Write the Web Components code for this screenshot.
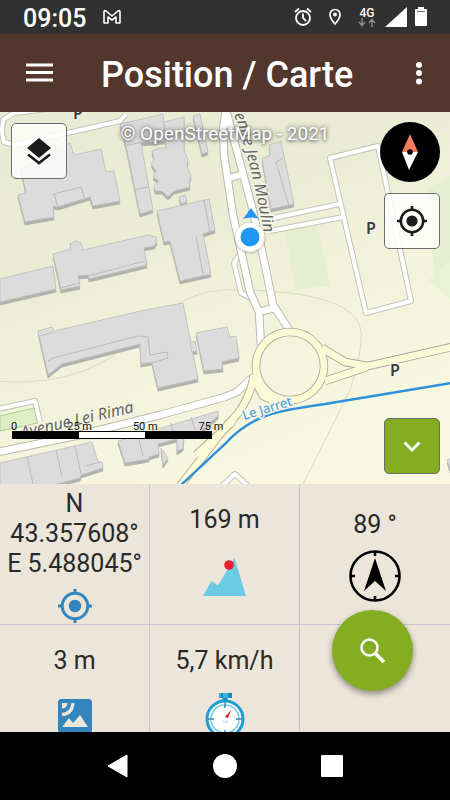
<!DOCTYPE html>
<html lang="fr">
<head>
<meta charset="utf-8">
<meta name="viewport" content="width=device-width, initial-scale=1">
<title>Position / Carte</title>
<style>
    body {
        margin: 0;
        height: 100vh;
        display: flex;
        flex-direction: column;
        overflow: hidden;
        font-family: Roboto, "Liberation Sans", sans-serif;
        background: #000;
    }
    map-view { flex: 3 1 0; min-height: 0; }
    data-panel { flex: 2 1 0; min-height: 0; }
</style>
</head>
<body>
<status-bar time="09:05"></status-bar>
<app-bar>Position / Carte</app-bar>
<map-view>
    <map-button slot="layers" label="Couches">
        <svg width="32" height="32" viewBox="0 0 32 32"><path d="M16 3 28 13 16 23 4 13z" fill="#1c1c1c"/><path d="M5 19.500 16 28 27 19.500" fill="none" stroke="#1c1c1c" stroke-width="2.600"/></svg>
    </map-button>
    <map-button slot="locate" label="Ma position">
        <svg width="32" height="32" viewBox="0 0 32 32"><g fill="none" stroke="#1c1c1c" stroke-width="2.600"><circle cx="16" cy="16" r="11.200"/><path d="M16 1v5M16 26v5M1 16h5M26 16h5"/></g><circle cx="16" cy="16" r="5.600" fill="#1c1c1c"/></svg>
    </map-button>
    <map-button slot="collapse" label="Réduire" accent>
        <svg width="32" height="32" viewBox="0 0 32 32"><path d="M8.500 12.500 16 20l7.500-7.500" fill="none" stroke="#fff" stroke-width="2.800"/></svg>
    </map-button>
</map-view>
<data-panel>
    <data-cell>N 43.357608° E 5.488045°
        <svg slot="icon" width="34" height="34" viewBox="0 0 34 34"><g fill="none" stroke="#3385c0" stroke-width="3"><circle cx="17" cy="17" r="12.800"/><path d="M17 0v5M17 29v5M0 17h5M29 17h5"/></g><circle cx="17" cy="17" r="6.200" fill="#3385c0"/></svg>
    </data-cell>
    <data-cell>169 m
        <svg slot="icon" width="62" height="62" viewBox="0 0 62 62"><path d="M9 51 17.500 36 24 40.500 40.500 13 52 51z" fill="#6ccae2"/><circle cx="35" cy="20" r="4.800" fill="#ed1c2e"/></svg>
    </data-cell>
    <data-cell>89 °
        <svg slot="icon" width="52" height="52" viewBox="0 0 52 52"><g fill="none" stroke="#000" stroke-width="2.600"><circle cx="26" cy="26" r="24.500"/><path d="M26 2v4M26 46v4M2 26h4M46 26h4"/></g><path d="M26 8 37 41 26 31 15 41z"/></svg>
    </data-cell>
    <data-cell>3 m
        <svg slot="icon" width="62" height="62" viewBox="0 0 62 62"><rect x="14" y="13" width="34" height="34" rx="3.500" fill="#3385c0"/><path d="M18 17h5.500q0 5-5.500 5.500z" fill="#ebe5da"/><path d="M29 17q-1 11-11 11.500" fill="none" stroke="#ebe5da" stroke-width="3.200"/><path d="M18 41l7-9 4 5 7-8 8 12z" fill="#ebe5da"/></svg>
    </data-cell>
    <data-cell>5,7 km/h
        <svg slot="icon" width="62" height="62" viewBox="0 0 62 62"><path d="M28.500 10h5v6h-5z" fill="#1688b8"/><path d="M25 7h13v5H25z" fill="#39b2dc"/><path d="M27 7h2v5h-2zM34 7h4v5h-4z" fill="#1688b8"/><circle cx="31" cy="33" r="18" fill="#fff" stroke="#209dd0" stroke-width="3"/><circle cx="31" cy="33" r="14" fill="none" stroke="#79cde8" stroke-width="1.600"/><path d="M31 16v6M31 44v6M14 33h6M42 33h6" stroke="#3b86ac" stroke-width="1.400"/><path d="M31 31 37 24 34 32z" fill="#e2202f"/><path d="M29 35q4 3 5-1" fill="none" stroke="#9ccfe8"/></svg>
    </data-cell>
    <data-cell></data-cell>
</data-panel>
<nav-bar></nav-bar>

<script>
class StatusBar extends HTMLElement {
    constructor() {
        super();
        this.attachShadow({mode: "open"});
    }

    connectedCallback() {
        this.shadowRoot.innerHTML = `
        <style>
        :host {
            display: flex;
            flex: none;
            align-items: center;
            height: 34px;
            padding: 0 22px 0 23px;
            box-sizing: border-box;
            background: #313131;
            color: #fff;
        }
        time {
            padding-top: 4px;
            font-size: 25px;
            line-height: 30px;
            font-weight: 500;
            margin-right: 16px;
        }
        .spacer { flex: 1; }
        .network {
            display: flex;
            flex-direction: column;
            align-items: center;
            width: 18px;
            margin: 0 9px 0 16px;
            font-size: 12px;
            line-height: 10px;
            font-weight: 500;
        }
        svg { display: block; }
        .alarm { margin-right: 16px; }
        .signal { margin-right: 7px; }
        </style>
        <time>${this.getAttribute("time")}</time>
        <svg width="20" height="16" viewBox="0 0 20 16"><path d="M2 14V3q0-2 2-1l6 5 6-5q2-1 2 1v11h-4V8l-4 3-4-3v6z" fill="none" stroke="#fff" stroke-width="1.600" stroke-linejoin="round"/></svg>
        <span class="spacer"></span>
        <svg class="alarm" width="18" height="20" viewBox="0 0 18 20"><g fill="none" stroke="#fff" stroke-width="1.800"><circle cx="9" cy="11" r="7"/><path d="M9 6.500V11l3 3M1 5l4-3.500M17 5l-4-3.500"/></g></svg>
        <svg width="14" height="18" viewBox="0 0 14 18"><path d="M7 16Q2 10.500 2 6.500a5 5 0 0 1 10 0Q12 10.500 7 16z" fill="none" stroke="#fff" stroke-width="1.700"/><circle cx="7" cy="6.500" r="2" fill="#fff"/></svg>
        <span class="network">4G
            <svg width="18" height="9" viewBox="0 0 18 9"><path d="M4 0v7M1 4l3 3.500L7 4M14 9V2M11 5l3-3.500L17 5" fill="none" stroke="#8b8b8b" stroke-width="1.500"/></svg>
        </span>
        <svg class="signal" width="22" height="20" viewBox="0 0 22 20"><path d="M22 0v20H0z" fill="#fff"/></svg>
        <svg width="14" height="20" viewBox="0 0 14 20"><path d="M4 0h6v2H4zM2 2h10q1 0 1 1v15q0 1-1 1H2q-1 0-1-1V3q0-1 1-1z" fill="#fff"/><path d="M3 4.500h8" stroke="#777"/></svg>
        `;
    }
}
customElements.define("status-bar", StatusBar);

class AppBar extends HTMLElement {
    constructor() {
        super();
        this.attachShadow({mode: "open"}).innerHTML = `
        <style>
        :host {
            display: flex;
            flex: none;
            align-items: center;
            height: 78px;
            padding: 0 7px 0 16px;
            box-sizing: border-box;
            background: #53362c;
            color: #fff;
        }
        h1 {
            flex: 1;
            margin: 0 0 0 37px;
            padding-top: 4px;
            font-size: 36px;
            line-height: 44px;
            font-weight: 500;
            white-space: nowrap;
        }
        button {
            width: 48px;
            height: 48px;
            padding: 0;
            border: 0;
            background: none;
        }
        svg { display: block; margin: auto; }
        </style>
        <button aria-label="Menu"><svg width="28" height="22" viewBox="0 0 28 22"><path d="M0 3h27M0 10.500h27M0 18h27" stroke="#fff" stroke-width="2.800"/></svg></button>
        <h1><slot></slot></h1>
        <button aria-label="Options"><svg width="8" height="26" viewBox="0 0 8 26" fill="#fff"><circle cx="4" cy="5" r="3"/><circle cx="4" cy="13" r="3"/><circle cx="4" cy="21.500" r="3"/></svg></button>
        `;
    }
}
customElements.define("app-bar", AppBar);

class MapButton extends HTMLElement {
    constructor() {
        super();
        this.attachShadow({mode: "open"});
    }

    connectedCallback() {
        this.shadowRoot.innerHTML = `
        <style>
        :host { display: block; }
        button {
            display: flex;
            align-items: center;
            justify-content: center;
            width: 56px;
            height: 56px;
            padding: 0;
            border: 1px solid #6d6d6a;
            border-radius: 5px;
            background: rgba(255, 255, 255, 0.8);
        }
        :host([accent]) button { background: #84ad22; }
        </style>
        <button aria-label="${this.getAttribute("label")}"><slot></slot></button>
        `;
    }
}
customElements.define("map-button", MapButton);

class ScaleBar extends HTMLElement {
    constructor() {
        super();
        this.attachShadow({mode: "open"}).innerHTML = `
        <style>
        :host { display: block; width: 200px; }
        .labels {
            display: flex;
            justify-content: space-between;
            padding: 0 1px 0 2px;
            font-size: 11px;
            line-height: 9px;
            color: #111;
        }
        .labels span {
            display: flex;
            justify-content: center;
            width: 0;
            white-space: nowrap;
        }
        .bar {
            display: grid;
            grid-template-columns: repeat(3, 1fr);
            height: 6px;
            border: 1px solid #000;
            background: #000;
        }
        .bar i:nth-child(2) { background: #fff; }
        </style>
        <div class="labels"><span>0</span><span>25 m</span><span>50 m</span><span>75 m</span></div>
        <div class="bar"><i></i><i></i><i></i></div>
        `;
    }
}
customElements.define("scale-bar", ScaleBar);

class MapView extends HTMLElement {
    constructor() {
        super();
        this.attachShadow({mode: "open"}).innerHTML = `
        <style>
        :host {
            display: block;
            position: relative;
            overflow: hidden;
            background: #f0f0d9;
        }
        .map { display: block; width: 100%; height: 100%; }
        .map text { font-family: "Noto Sans", "Open Sans", sans-serif; }
        .halo { paint-order: stroke; stroke: #f4f4e4; stroke-width: 3px; stroke-linejoin: round; }
        .credit {
            position: absolute;
            top: 11px;
            left: 0;
            right: 0;
            text-align: center;
            font-size: 19px;
            line-height: 22px;
            color: #fff;
            text-shadow: 0 0 5px #555, 0 1px 3px #777;
        }
        slot { display: block; }
        .layers, .compass, .locate, .collapse, scale-bar { position: absolute; }
        .layers { top: 11px; left: 11px; }
        .compass {
            top: 10px;
            right: 10px;
            width: 60px;
            height: 60px;
            padding: 0;
            border: 0;
            border-radius: 50%;
            background: #000;
        }
        .compass svg { display: block; }
        .locate { top: 81px; right: 10px; }
        .collapse { bottom: 10px; right: 10px; }
        scale-bar { left: 12px; bottom: 45px; }
        </style>
        <svg class="map" viewBox="0 112 450 372" preserveAspectRatio="xMidYMid slice" role="img" aria-label="Carte">
            <defs>
                <linearGradient id="ground" x1="0" y1="0" x2=".5" y2="1">
                    <stop offset="0" stop-color="#e8ebd3"/><stop offset=".4" stop-color="#ebecd4"/>
                    <stop offset=".55" stop-color="#f1f1da"/><stop offset="1" stop-color="#f8f7e0"/>
                </linearGradient>
                <g id="buildings" stroke-width=".8" stroke-linejoin="round">
                    <path d="M21 169 70 143 74 155 101 149 106 172 114 171 120 201 93 206 90 197 58 207 53 206 54 217 25 222 18 195 26 193z"/>
                    <path d="M120 124 142 119 163 114 165 141 141 143 153 210 140 214 126 146z"/>
                    <path d="M164 122 184 117 184 150 188 160 187 166 191 176 189 182 190 187 186 188 174 191 168 197 162 191 155 191 154 186 159 181 153 177 156 171 151 164 154 159 152 151 160 148 166 148z"/>
                    <path d="M193 116 200 114 208 152 202 154z"/>
                    <path d="M179 197 185 195 187 202 181 204z"/>
                    <path d="M157 211 209 199 215 230 203 234 211 274 180 281 170 241 164 242z"/>
                    <path d="M53 254 71 249 70 244 75 241 81 243 83 250 148 235 156 237 157 242 154 246 144 248 147 265 89 279 88 275 78 276 80 286 61 290z"/>
                    <path d="M0 279 53 266 56 289 0 302z"/>
                    <path d="M38 331 52 327 54 331 145 310 183 303 198 379 158 388 152 362 141 364 140 344 62 364 48 375z"/>
                    <path d="M190 342 195 341 197 351 192 352z"/>
                    <path d="M196 333 227 327 230 337 236 336 239 358 222 362 223 369 204 371z"/>
                    <path d="M262 159 270 155 269 145 281 141 294 204 271 209z"/>
                    <path d="M0 463 92 442 98 462 102 462 103 468 81 475 80 478 50 486 0 486z"/>
                    <path d="M118 441 218 411 218 416 200 432 184 435 183 448 177 452 177 439 158 444 159 454 149 457 149 459 125 463z"/>
                    <path d="M161 448 168 458 163 465z"/>
                    <path d="M447 460 452 458V475z"/>
                </g>
                <g id="roads" fill="none" stroke-linejoin="round">
                    <path d="M-2 452 75 436 160 415 225 397 237 392 252 378"/>
                    <path d="M226 110 223 130 224 155 233 215 243 260 250 292 259 312 261 345"/>
                    <path d="M226 110 238 155 252 207 265 265 273 305 290 331"/>
                    <path d="M226 179 243 174M258 312 275 308"/>
                </g>
                <g id="lanes" fill="none" stroke-linejoin="round">
                    <path d="M126 114 120 121 15 145 4 142Q0 128 4 119L14 113 73 106"/>
                    <path d="M378 146 330 158 366 313 411 301z"/>
                    <path d="M269 219 339 204M270 231 343 217"/>
                    <path d="M239 255 234 263 241 293 251 298"/>
                    <path d="M-2 409 35 401 40 422"/>
                    <path d="M222 486 235 474 248 486"/>
                </g>
                <g id="main" fill="none" stroke-linejoin="round">
                    <circle cx="290" cy="366" r="34"/>
                    <path d="M322 348 345 362 368 366 452 347M325 381 367 367"/>
                    <path d="M254 375Q249 405 228 424L180 486M255 381 263 396 280 404"/>
                    <path d="M236 415 230 424 196 455"/>
                </g>
                <path id="avenue" d="M205 30Q223 90 238 125Q251 165 264 233"/>
            </defs>
            <rect y="112" width="450" height="372" fill="url(#ground)"/>
            <path d="M285 229 317 224 330 285 295 291zM427 190 450 175V270L435 280z" fill="#e6eed0"/>
            <path d="M428 280 450 260V299z" fill="#eaf2d5"/>
            <path d="M-2 381Q65 387 115 355M180 303Q205 287 245 290C330 292 365 310 361 340Q360 360 350 390 320 450 303 484" fill="none" stroke="#dadbc7"/>
            <path d="M0 416 34 408 38 423 0 431z" fill="#dfeec4" stroke="#a5cd8b"/>
            <use href="#buildings" y="3" fill="#b1b1ae" stroke="#b1b1ae"/>
            <use href="#buildings" fill="#dcdcdc" stroke="#bcbcba"/>
            <path d="M54 194 81 187 85 199 58 207zM124 146 143 142M134 190 148 187M204 200 210 233M196 236 203 274M48 361 53 358 138 336 148 337 150 355 167 352 168 358 142 366M60 288 80 283M88 276 145 261M40 336 53 332M279 209 289 206 276 162 283 158M27 456 33 484M56 450 62 476M75 446 81 474M86 466 100 462M138 435 143 456M171 423 174 435M191 417 195 430" fill="none" stroke="#bababa"/>
            <use href="#lanes" stroke="#c4c4bb" stroke-width="6"/>
            <use href="#lanes" stroke="#fff" stroke-width="4"/>
            <use href="#roads" stroke="#bab9ad" stroke-width="8.500"/>
            <use href="#roads" stroke="#fff" stroke-width="6.500"/>
            <use href="#main" stroke="#aaa89a" stroke-width="8.500"/>
            <use href="#main" stroke="#fcfbd5" stroke-width="6.800"/>
            <path d="M180 486 225 444Q243 424 268 415 282 410 325 404L452 383" fill="none" stroke="#2f91d9" stroke-width="2.400"/>
            <text class="halo" font-size="16" font-style="italic" fill="#666"><textPath href="#avenue" startOffset="212" text-anchor="end">Avenue Jean Moulin</textPath></text>
            <text class="halo" font-size="16" font-style="italic" fill="#666" transform="translate(22 438) rotate(-13)">Avenue Lei Rima</text>
            <text class="halo" font-size="13" fill="#3e9ad9" transform="translate(244 420) rotate(-17)">Le Jarret</text>
            <g class="halo" font-size="16" font-weight="600" fill="#3c3c3c">
                <text x="73" y="119">P</text><text x="366" y="234">P</text><text x="390" y="376">P</text>
            </g>
            <path d="M251 208 259 219Q251 216 243 219z" fill="#2196f3"/>
            <circle cx="250" cy="238" r="16" fill="#000" opacity=".12"/>
            <circle cx="250" cy="237" r="14.500" fill="#fff"/>
            <circle cx="250" cy="237" r="9.500" fill="#2196f3"/>
        </svg>
        <div class="credit">© OpenStreetMap - 2021</div>
        <slot class="layers" name="layers"></slot>
        <button class="compass" aria-label="Boussole"><svg width="60" height="60" viewBox="0 0 60 60"><path d="M30 12 38 30H22z" fill="#f77b61"/><path d="M22 30H38L29 48z" fill="#fff"/><circle cx="30" cy="30" r="2.800"/></svg></button>
        <slot class="locate" name="locate"></slot>
        <slot class="collapse" name="collapse"></slot>
        <scale-bar></scale-bar>
        `;
    }
}
customElements.define("map-view", MapView);

class DataCell extends HTMLElement {
    constructor() {
        super();
        this.attachShadow({mode: "open"}).innerHTML = `
        <style>
        :host {
            display: flex;
            flex-direction: column;
            align-items: center;
            justify-content: center;
            gap: 10px;
            padding-top: 3px;
            box-sizing: border-box;
            border-right: 1px solid #c6c7cd;
            border-bottom: 1px solid #c6c7cd;
        }
        :host(:nth-child(3n)) { border-right: 0; }
        .value {
            padding: 0 4px;
            text-align: center;
            font-size: 25px;
            line-height: 30px;
            color: #292929;
        }
        ::slotted(svg) { display: block; }
        </style>
        <div class="value"><slot></slot></div>
        <slot name="icon"></slot>
        `;
    }
}
customElements.define("data-cell", DataCell);

class DataPanel extends HTMLElement {
    constructor() {
        super();
        this.attachShadow({mode: "open"}).innerHTML = `
        <style>
        :host {
            display: block;
            position: relative;
            background: #ebe5da;
        }
        .cells {
            display: grid;
            grid-template-columns: repeat(3, 1fr);
            grid-auto-rows: 141px;
            height: 100%;
            overflow: hidden;
        }
        .search {
            position: absolute;
            right: 37px;
            bottom: 41px;
            display: flex;
            align-items: center;
            justify-content: center;
            width: 81px;
            height: 81px;
            padding: 0;
            border: 0;
            border-radius: 50%;
            background: #84ad22;
            box-shadow: 0 3px 6px rgba(0, 0, 0, 0.4);
        }
        </style>
        <div class="cells"><slot></slot></div>
        <button class="search" aria-label="Rechercher"><svg width="32" height="32" viewBox="0 0 32 32" fill="none" stroke="#fff"><circle cx="12.500" cy="12.500" r="8" stroke-width="2.600"/><path d="M18.500 18.500 27 27" stroke-width="3.600"/></svg></button>
        `;
    }
}
customElements.define("data-panel", DataPanel);

class NavBar extends HTMLElement {
    constructor() {
        super();
        this.attachShadow({mode: "open"}).innerHTML = `
        <style>
        :host {
            display: flex;
            flex: none;
            justify-content: center;
            height: 68px;
            background: #000;
        }
        button {
            display: flex;
            align-items: center;
            justify-content: center;
            width: 107px;
            padding: 0;
            border: 0;
            background: none;
        }
        </style>
        <button aria-label="Retour"><svg width="24" height="24" viewBox="0 0 24 24"><path d="M2 12 21 1V23z" fill="#fff" stroke="#fff" stroke-linejoin="round"/></svg></button>
        <button aria-label="Accueil"><svg width="24" height="24" viewBox="0 0 24 24"><circle cx="12" cy="12" r="12" fill="#fff"/></svg></button>
        <button aria-label="Applications"><svg width="22" height="22" viewBox="0 0 22 22"><rect width="22" height="22" rx="1" fill="#fff"/></svg></button>
        `;
    }
}
customElements.define("nav-bar", NavBar);
</script>
</body>
</html>
